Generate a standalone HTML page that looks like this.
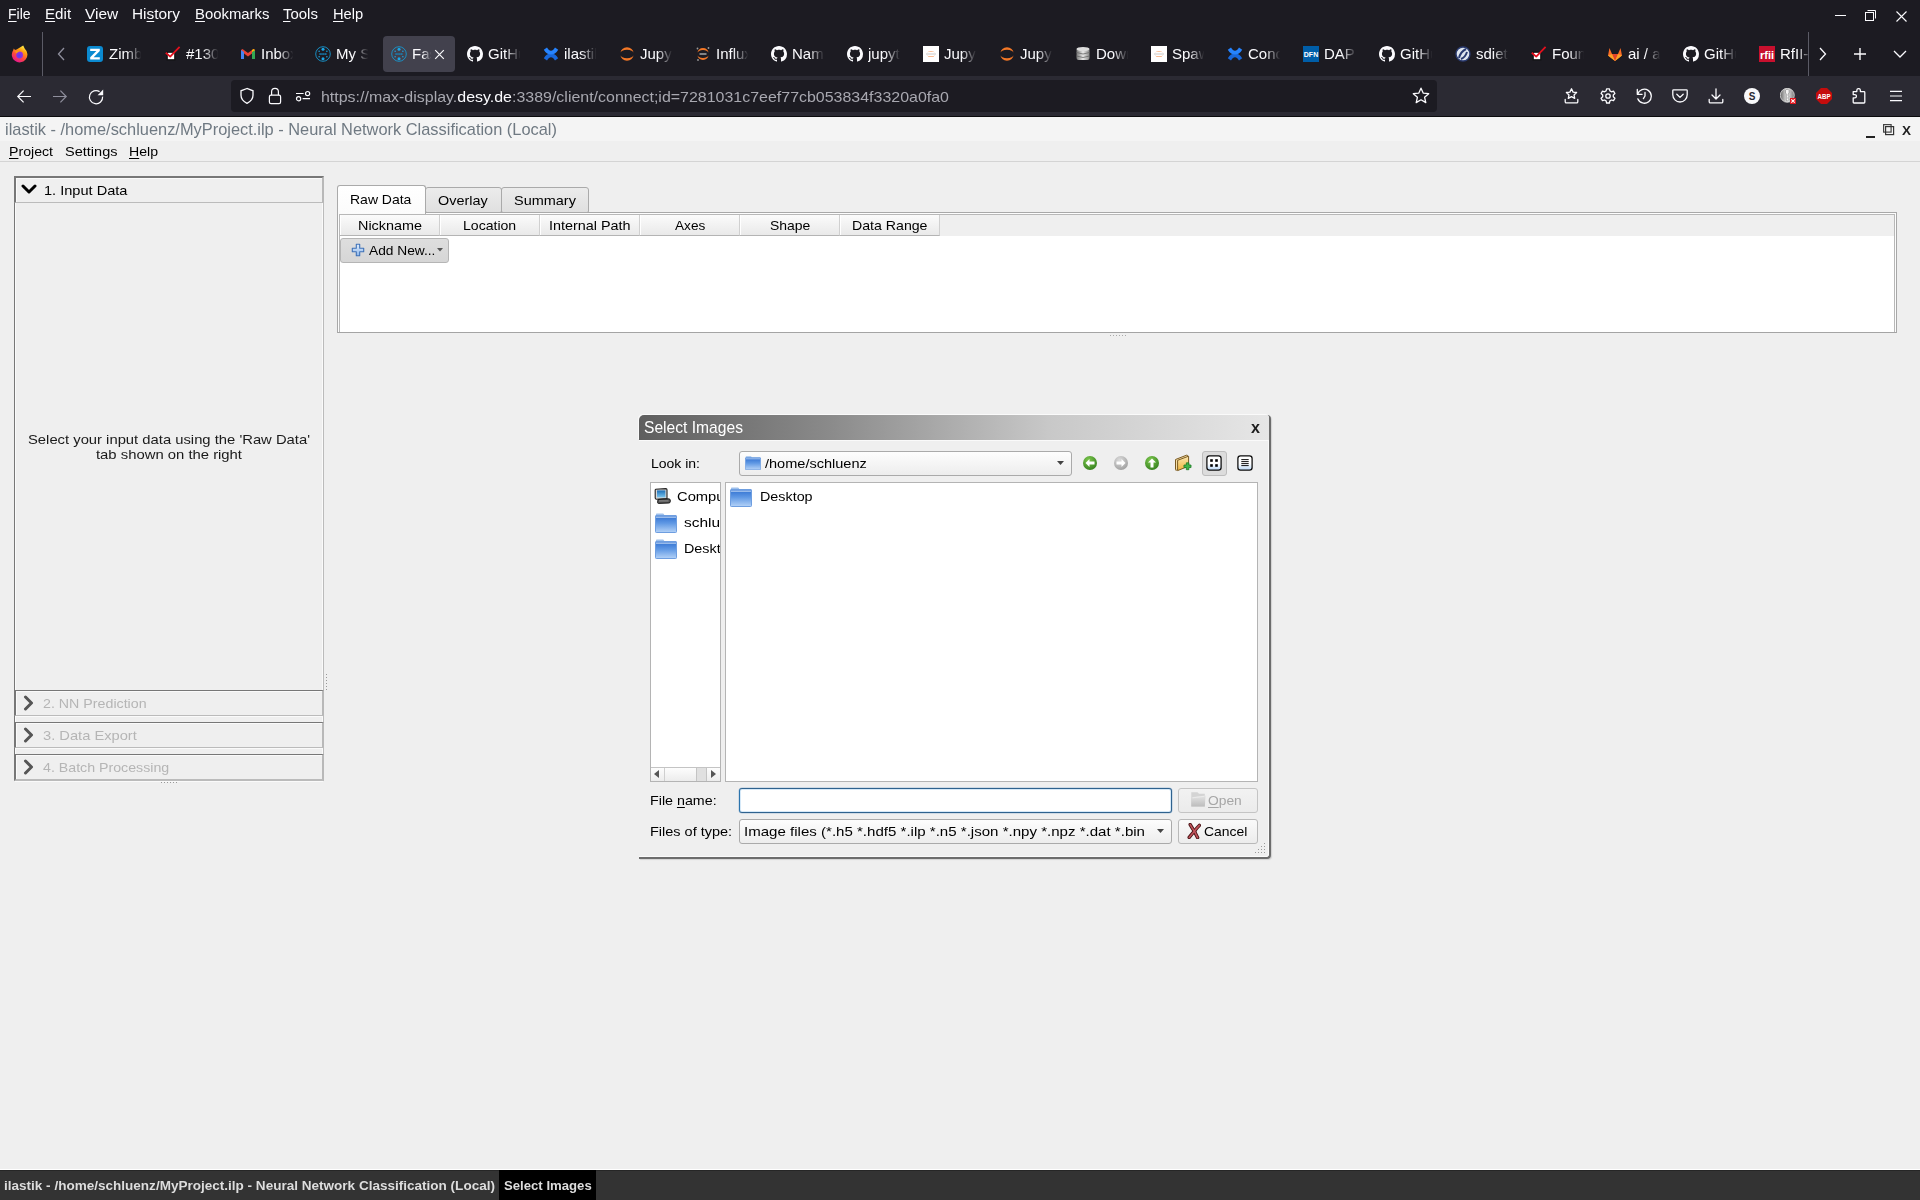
<!DOCTYPE html><html><head><meta charset="utf-8"><style>
*{margin:0;padding:0;box-sizing:border-box}
html,body{width:1920px;height:1200px;overflow:hidden;background:#efefef;font-family:"Liberation Sans",sans-serif}
.a{position:absolute}
.t{position:absolute;white-space:nowrap;line-height:1}
.mm{color:#fbfbfe;font-size:15px;top:6px}
.ul{text-decoration:underline;text-underline-offset:2px}
.tab{position:absolute;top:36px;height:36px;width:72px}
.tx{position:absolute;font-size:15px;color:#fbfbfe;white-space:nowrap;overflow:hidden;line-height:16px;
 -webkit-mask-image:linear-gradient(90deg,#000 52%,transparent 98%);mask-image:linear-gradient(90deg,#000 52%,transparent 98%)}
.dv{font-size:13px;color:#000}
</style></head><body>
<div class="a" style="left:0;top:0;width:1920px;height:76px;background:#1c1b22"></div>
<div class="a" style="left:0;top:76px;width:1920px;height:40px;background:#2b2a33"></div>
<div class="a" style="left:0;top:116px;width:1920px;height:1px;background:#0b0b0d"></div>
<div class="t" id="f1" style="left:8px;top:7px;font-size:14px;color:#fbfbfe;transform:scaleX(1.0054);transform-origin:0 0;"><span class="ul">F</span>ile</div>
<div class="t" id="f2" style="left:45px;top:7px;font-size:14px;color:#fbfbfe;transform:scaleX(1.0812);transform-origin:0 0;"><span class="ul">E</span>dit</div>
<div class="t" id="f3" style="left:85px;top:7px;font-size:14px;color:#fbfbfe;transform:scaleX(1.1026);transform-origin:0 0;"><span class="ul">V</span>iew</div>
<div class="t" id="f4" style="left:132px;top:7px;font-size:14px;color:#fbfbfe;transform:scaleX(1.0992);transform-origin:0 0;">Hi<span class="ul">s</span>tory</div>
<div class="t" id="f5" style="left:195px;top:7px;font-size:14px;color:#fbfbfe;transform:scaleX(1.0624);transform-origin:0 0;"><span class="ul">B</span>ookmarks</div>
<div class="t" id="f6" style="left:283px;top:7px;font-size:14px;color:#fbfbfe;transform:scaleX(1.0677);transform-origin:0 0;"><span class="ul">T</span>ools</div>
<div class="t" id="f7" style="left:333px;top:7px;font-size:14px;color:#fbfbfe;transform:scaleX(1.0482);transform-origin:0 0;"><span class="ul">H</span>elp</div>
<div class="a" style="left:1835px;top:15px;width:11px;height:1px;background:#fbfbfe"></div>
<svg class="a" style="left:1864px;top:9px" width="13" height="13"><rect x="1.5" y="3.5" width="8" height="8" fill="none" stroke="#fbfbfe"/><path d="M3.5 1.5h8v8" fill="none" stroke="#fbfbfe"/></svg>
<svg class="a" style="left:1896px;top:11px" width="11" height="11"><path d="M0.5 0.5L10.5 10.5M10.5 0.5L0.5 10.5" stroke="#fbfbfe" stroke-width="1.1"/></svg>
<svg class="a" style="left:11px;top:45px" width="18" height="18" viewBox="0 0 18 18">
<defs><linearGradient id="fxg" x1="0.85" y1="0.05" x2="0.35" y2="1"><stop offset="0" stop-color="#fff44f"/><stop offset="0.3" stop-color="#ffa40e"/><stop offset="0.65" stop-color="#ff4a3d"/><stop offset="1" stop-color="#e6158f"/></linearGradient>
<radialGradient id="fxp" cx="0.45" cy="0.6" r="0.6"><stop offset="0" stop-color="#5b3df0"/><stop offset="1" stop-color="#9f2fd8"/></radialGradient></defs>
<path d="M12.2 0.6l1.6 3.2A7.8 7.8 0 1 1 2.2 5.2l.6-1.6 1.2 1.4 1.6-.6z" fill="url(#fxg)"/>
<circle cx="8.6" cy="10" r="3.4" fill="url(#fxp)"/>
<path d="M3.8 6.6c1.6-1 3.8-.9 5.2.1-1.4 0-2.8.6-3.4 1.8z" fill="#ff9a0e"/>
</svg>
<div class="a" style="left:42px;top:32px;width:1px;height:44px;background:#5b5b66"></div>
<svg class="a" style="left:56px;top:47px" width="12" height="14"><path d="M8 1L2.5 7L8 13" fill="none" stroke="#8f8f9d" stroke-width="1.3"/></svg>
<div class="a" style="left:383px;top:36px;width:72px;height:36px;border-radius:4px;background:#42414d"></div>
<div class="a" style="left:87px;top:46px;width:16px;height:16px"><svg width="16" height="16"><rect x="0" y="0" width="16" height="16" rx="3" fill="#0b8ad0"/><path d="M3.2 2.8h9.6v2.2L6.6 11.2h6.2v2.2H3.2v-2.2L9.4 5H3.2z" fill="#fff"/></svg></div>
<div class="tx" style="left:109px;top:46px;width:33px">Zimbra</div>
<div class="a" style="left:165px;top:46px;width:16px;height:16px"><svg width="16" height="16"><rect x="2.2" y="6.2" width="7.6" height="7.6" fill="#fff" stroke="#111" stroke-width="1.2"/><path d="M0.8 6.8l4.4 3.8L14.6 0.8" fill="none" stroke="#e3101e" stroke-width="1.8" stroke-linejoin="round"/></svg></div>
<div class="tx" style="left:186px;top:46px;width:33px">#1304</div>
<div class="a" style="left:240px;top:46px;width:16px;height:16px"><svg width="16" height="16"><path d="M1 4v9h3V7.5L8 10.5l4-3V13h3V4l-1.5-1L8 7 2.5 3z" fill="#ea4335"/><path d="M1 4v9h3V6z" fill="#4285f4"/><path d="M12 6v7h3V4z" fill="#34a853"/><path d="M12 6l3-2-1.5-1L12 4z" fill="#fbbc04"/></svg></div>
<div class="tx" style="left:261px;top:46px;width:33px">Inbox</div>
<div class="a" style="left:315px;top:46px;width:16px;height:16px"><svg width="16" height="16"><circle cx="8" cy="8" r="7.3" fill="none" stroke="#1797d0" stroke-width=".9"/><g fill="#1aa6e6"><circle cx="8" cy="3.2" r="1.5"/><circle cx="8" cy="12.8" r="1.5"/><circle cx="4.1" cy="5.3" r=".75"/><circle cx="11.9" cy="5.3" r=".75"/><circle cx="4.1" cy="10.7" r=".75"/><circle cx="11.9" cy="10.7" r=".75"/></g><g fill="#1585bd"><rect x="4.4" y="7.2" width="1.4" height="1.7"/><rect x="6.3" y="7.2" width="1.4" height="1.7"/><rect x="8.2" y="7.2" width="1.4" height="1.7"/><rect x="10.1" y="7.2" width="1.4" height="1.7"/></g></svg></div>
<div class="tx" style="left:336px;top:46px;width:33px">My Sp</div>
<div class="a" style="left:391px;top:46px;width:16px;height:16px"><svg width="16" height="16"><circle cx="8" cy="8" r="7.3" fill="none" stroke="#1797d0" stroke-width=".9"/><g fill="#1aa6e6"><circle cx="8" cy="3.2" r="1.5"/><circle cx="8" cy="12.8" r="1.5"/><circle cx="4.1" cy="5.3" r=".75"/><circle cx="11.9" cy="5.3" r=".75"/><circle cx="4.1" cy="10.7" r=".75"/><circle cx="11.9" cy="10.7" r=".75"/></g><g fill="#1585bd"><rect x="4.4" y="7.2" width="1.4" height="1.7"/><rect x="6.3" y="7.2" width="1.4" height="1.7"/><rect x="8.2" y="7.2" width="1.4" height="1.7"/><rect x="10.1" y="7.2" width="1.4" height="1.7"/></g></svg></div>
<div class="tx" style="left:412px;top:46px;width:20px">Fast</div>
<div class="a" style="left:467px;top:46px;width:16px;height:16px"><svg width="16" height="16" viewBox="0 0 16 16"><path fill="#fbfbfe" d="M8 0C3.58 0 0 3.58 0 8c0 3.54 2.29 6.53 5.47 7.59.4.07.55-.17.55-.38 0-.19-.01-.82-.01-1.49-2.01.37-2.53-.49-2.69-.94-.09-.23-.48-.94-.82-1.13-.28-.15-.68-.52-.01-.53.63-.01 1.08.58 1.23.82.72 1.21 1.87.87 2.33.66.07-.52.28-.87.51-1.07-1.78-.2-3.64-.89-3.64-3.95 0-.87.31-1.59.82-2.15-.08-.2-.36-1.02.08-2.12 0 0 .67-.21 2.2.82.64-.18 1.32-.27 2-.27.68 0 1.36.09 2 .27 1.53-1.04 2.2-.82 2.2-.82.44 1.1.16 1.92.08 2.12.51.56.82 1.27.82 2.15 0 3.07-1.87 3.75-3.65 3.95.29.25.54.73.54 1.48 0 1.07-.01 1.93-.01 2.2 0 .21.15.46.55.38A8.013 8.013 0 0016 8c0-4.42-3.58-8-8-8z"/></svg></div>
<div class="tx" style="left:488px;top:46px;width:33px">GitHub</div>
<div class="a" style="left:543px;top:46px;width:16px;height:16px"><svg width="16" height="16"><path d="M0.8 12.2C2.8 8.8 5.2 7.4 8 7.4s5.2 1.4 7.2 4.8l-3.2 2.2C10.6 12 9.4 11.2 8 11.2s-2.6.8-4 3.2z" fill="#1868db"/><path d="M15.2 3.8C13.2 7.2 10.8 8.6 8 8.6S2.8 7.2.8 3.8L4 1.6C5.4 4 6.6 4.8 8 4.8s2.6-.8 4-3.2z" fill="#2684ff"/></svg></div>
<div class="tx" style="left:564px;top:46px;width:33px">ilastik</div>
<div class="a" style="left:619px;top:46px;width:16px;height:16px"><svg width="16" height="16"><path d="M1.5 7A6.5 5.8 0 0 1 14.5 7 6.5 3.2 0 0 0 1.5 7z" fill="#f37726"/><path d="M1.5 9A6.5 5.8 0 0 0 14.5 9 6.5 3.2 0 0 1 1.5 9z" fill="#f37726"/></svg></div>
<div class="tx" style="left:640px;top:46px;width:33px">Jupyter</div>
<div class="a" style="left:695px;top:46px;width:16px;height:16px"><svg width="16" height="16"><path d="M2.5 7A5.5 5 0 0 1 13.5 7 5.5 3 0 0 0 2.5 7z" fill="#f37726"/><path d="M2.5 9A5.5 5 0 0 0 13.5 9 5.5 3 0 0 1 2.5 9z" fill="#f37726"/><circle cx="2.5" cy="2.5" r=".9" fill="#9a9a9a"/><circle cx="3" cy="14" r=".9" fill="#9a9a9a"/><circle cx="13.5" cy="2" r=".9" fill="#9a9a9a"/><rect x="4.5" y="7.3" width="7" height="1.4" fill="#b0b0b0"/></svg></div>
<div class="tx" style="left:716px;top:46px;width:33px">Influx</div>
<div class="a" style="left:771px;top:46px;width:16px;height:16px"><svg width="16" height="16" viewBox="0 0 16 16"><path fill="#fbfbfe" d="M8 0C3.58 0 0 3.58 0 8c0 3.54 2.29 6.53 5.47 7.59.4.07.55-.17.55-.38 0-.19-.01-.82-.01-1.49-2.01.37-2.53-.49-2.69-.94-.09-.23-.48-.94-.82-1.13-.28-.15-.68-.52-.01-.53.63-.01 1.08.58 1.23.82.72 1.21 1.87.87 2.33.66.07-.52.28-.87.51-1.07-1.78-.2-3.64-.89-3.64-3.95 0-.87.31-1.59.82-2.15-.08-.2-.36-1.02.08-2.12 0 0 .67-.21 2.2.82.64-.18 1.32-.27 2-.27.68 0 1.36.09 2 .27 1.53-1.04 2.2-.82 2.2-.82.44 1.1.16 1.92.08 2.12.51.56.82 1.27.82 2.15 0 3.07-1.87 3.75-3.65 3.95.29.25.54.73.54 1.48 0 1.07-.01 1.93-.01 2.2 0 .21.15.46.55.38A8.013 8.013 0 0016 8c0-4.42-3.58-8-8-8z"/></svg></div>
<div class="tx" style="left:792px;top:46px;width:33px">Name</div>
<div class="a" style="left:847px;top:46px;width:16px;height:16px"><svg width="16" height="16" viewBox="0 0 16 16"><path fill="#fbfbfe" d="M8 0C3.58 0 0 3.58 0 8c0 3.54 2.29 6.53 5.47 7.59.4.07.55-.17.55-.38 0-.19-.01-.82-.01-1.49-2.01.37-2.53-.49-2.69-.94-.09-.23-.48-.94-.82-1.13-.28-.15-.68-.52-.01-.53.63-.01 1.08.58 1.23.82.72 1.21 1.87.87 2.33.66.07-.52.28-.87.51-1.07-1.78-.2-3.64-.89-3.64-3.95 0-.87.31-1.59.82-2.15-.08-.2-.36-1.02.08-2.12 0 0 .67-.21 2.2.82.64-.18 1.32-.27 2-.27.68 0 1.36.09 2 .27 1.53-1.04 2.2-.82 2.2-.82.44 1.1.16 1.92.08 2.12.51.56.82 1.27.82 2.15 0 3.07-1.87 3.75-3.65 3.95.29.25.54.73.54 1.48 0 1.07-.01 1.93-.01 2.2 0 .21.15.46.55.38A8.013 8.013 0 0016 8c0-4.42-3.58-8-8-8z"/></svg></div>
<div class="tx" style="left:868px;top:46px;width:33px">jupyter</div>
<div class="a" style="left:923px;top:46px;width:16px;height:16px"><svg width="16" height="16"><rect width="16" height="16" fill="#fff"/><path d="M4 6.8A4.5 3.5 0 0 1 12 6.8 4.5 2.5 0 0 0 4 6.8z" fill="#f37726"/><path d="M4 9.2A4.5 3.5 0 0 0 12 9.2 4.5 2.5 0 0 1 4 9.2z" fill="#f37726"/><rect x="3" y="7.6" width="10" height=".8" fill="#bbb"/></svg></div>
<div class="tx" style="left:944px;top:46px;width:33px">Jupyter</div>
<div class="a" style="left:999px;top:46px;width:16px;height:16px"><svg width="16" height="16"><path d="M1.5 7A6.5 5.8 0 0 1 14.5 7 6.5 3.2 0 0 0 1.5 7z" fill="#f37726"/><path d="M1.5 9A6.5 5.8 0 0 0 14.5 9 6.5 3.2 0 0 1 1.5 9z" fill="#f37726"/></svg></div>
<div class="tx" style="left:1020px;top:46px;width:33px">Jupyter</div>
<div class="a" style="left:1075px;top:46px;width:16px;height:16px"><svg width="16" height="16"><defs><linearGradient id="dbg" x1="0" x2="1"><stop offset="0" stop-color="#777"/><stop offset=".5" stop-color="#e8e8e8"/><stop offset="1" stop-color="#888"/></linearGradient></defs><rect x="1.5" y="2" width="13" height="12" rx="2" fill="url(#dbg)"/><ellipse cx="8" cy="3" rx="6.5" ry="2" fill="#ddd"/><path d="M1.5 6.5q6.5 3 13 0M1.5 10q6.5 3 13 0" stroke="#666" fill="none" stroke-width=".8"/></svg></div>
<div class="tx" style="left:1096px;top:46px;width:33px">Downl</div>
<div class="a" style="left:1151px;top:46px;width:16px;height:16px"><svg width="16" height="16"><rect width="16" height="16" fill="#fff"/><path d="M4 6.8A4.5 3.5 0 0 1 12 6.8 4.5 2.5 0 0 0 4 6.8z" fill="#f37726"/><path d="M4 9.2A4.5 3.5 0 0 0 12 9.2 4.5 2.5 0 0 1 4 9.2z" fill="#f37726"/><rect x="3" y="7.6" width="10" height=".8" fill="#bbb"/></svg></div>
<div class="tx" style="left:1172px;top:46px;width:33px">Spawn</div>
<div class="a" style="left:1227px;top:46px;width:16px;height:16px"><svg width="16" height="16"><path d="M0.8 12.2C2.8 8.8 5.2 7.4 8 7.4s5.2 1.4 7.2 4.8l-3.2 2.2C10.6 12 9.4 11.2 8 11.2s-2.6.8-4 3.2z" fill="#1868db"/><path d="M15.2 3.8C13.2 7.2 10.8 8.6 8 8.6S2.8 7.2.8 3.8L4 1.6C5.4 4 6.6 4.8 8 4.8s2.6-.8 4-3.2z" fill="#2684ff"/></svg></div>
<div class="tx" style="left:1248px;top:46px;width:33px">Conce</div>
<div class="a" style="left:1303px;top:46px;width:16px;height:16px"><svg width="16" height="16"><rect width="16" height="16" fill="#005ea8"/><text x="8" y="11" font-family="Liberation Sans" font-weight="bold" font-size="7" fill="#fff" text-anchor="middle">DFN</text></svg></div>
<div class="tx" style="left:1324px;top:46px;width:33px">DAPH</div>
<div class="a" style="left:1379px;top:46px;width:16px;height:16px"><svg width="16" height="16" viewBox="0 0 16 16"><path fill="#fbfbfe" d="M8 0C3.58 0 0 3.58 0 8c0 3.54 2.29 6.53 5.47 7.59.4.07.55-.17.55-.38 0-.19-.01-.82-.01-1.49-2.01.37-2.53-.49-2.69-.94-.09-.23-.48-.94-.82-1.13-.28-.15-.68-.52-.01-.53.63-.01 1.08.58 1.23.82.72 1.21 1.87.87 2.33.66.07-.52.28-.87.51-1.07-1.78-.2-3.64-.89-3.64-3.95 0-.87.31-1.59.82-2.15-.08-.2-.36-1.02.08-2.12 0 0 .67-.21 2.2.82.64-.18 1.32-.27 2-.27.68 0 1.36.09 2 .27 1.53-1.04 2.2-.82 2.2-.82.44 1.1.16 1.92.08 2.12.51.56.82 1.27.82 2.15 0 3.07-1.87 3.75-3.65 3.95.29.25.54.73.54 1.48 0 1.07-.01 1.93-.01 2.2 0 .21.15.46.55.38A8.013 8.013 0 0016 8c0-4.42-3.58-8-8-8z"/></svg></div>
<div class="tx" style="left:1400px;top:46px;width:33px">GitHub</div>
<div class="a" style="left:1455px;top:46px;width:16px;height:16px"><svg width="16" height="16"><circle cx="8" cy="8" r="7" fill="#dfe6f0" stroke="#2a3b70" stroke-width="1.4"/><path d="M4 12c1-4 3-7 7-9M6 13c3-1 5-4 6-7" stroke="#2a3b70" stroke-width="2" fill="none"/></svg></div>
<div class="tx" style="left:1476px;top:46px;width:33px">sdiet</div>
<div class="a" style="left:1531px;top:46px;width:16px;height:16px"><svg width="16" height="16"><rect x="2.2" y="6.2" width="7.6" height="7.6" fill="#fff" stroke="#111" stroke-width="1.2"/><path d="M0.8 6.8l4.4 3.8L14.6 0.8" fill="none" stroke="#e3101e" stroke-width="1.8" stroke-linejoin="round"/></svg></div>
<div class="tx" style="left:1552px;top:46px;width:33px">Found</div>
<div class="a" style="left:1607px;top:46px;width:16px;height:16px"><svg width="16" height="16"><path d="M8 15L1 9.5 2.5 2 5 8h6l2.5-6L15 9.5z" fill="#fc6d26"/><path d="M8 15L5 8h6z" fill="#e24329"/><path d="M1 9.5L5 8 8 15zM15 9.5L11 8 8 15z" fill="#fca326"/></svg></div>
<div class="tx" style="left:1628px;top:46px;width:33px">ai / ai</div>
<div class="a" style="left:1683px;top:46px;width:16px;height:16px"><svg width="16" height="16" viewBox="0 0 16 16"><path fill="#fbfbfe" d="M8 0C3.58 0 0 3.58 0 8c0 3.54 2.29 6.53 5.47 7.59.4.07.55-.17.55-.38 0-.19-.01-.82-.01-1.49-2.01.37-2.53-.49-2.69-.94-.09-.23-.48-.94-.82-1.13-.28-.15-.68-.52-.01-.53.63-.01 1.08.58 1.23.82.72 1.21 1.87.87 2.33.66.07-.52.28-.87.51-1.07-1.78-.2-3.64-.89-3.64-3.95 0-.87.31-1.59.82-2.15-.08-.2-.36-1.02.08-2.12 0 0 .67-.21 2.2.82.64-.18 1.32-.27 2-.27.68 0 1.36.09 2 .27 1.53-1.04 2.2-.82 2.2-.82.44 1.1.16 1.92.08 2.12.51.56.82 1.27.82 2.15 0 3.07-1.87 3.75-3.65 3.95.29.25.54.73.54 1.48 0 1.07-.01 1.93-.01 2.2 0 .21.15.46.55.38A8.013 8.013 0 0016 8c0-4.42-3.58-8-8-8z"/></svg></div>
<div class="tx" style="left:1704px;top:46px;width:33px">GitHub</div>
<div class="a" style="left:1759px;top:46px;width:16px;height:16px"><svg width="16" height="16"><rect width="16" height="16" fill="#c8102e"/><text x="8" y="13" font-family="Liberation Sans" font-weight="bold" font-size="11" fill="#fff" text-anchor="middle">rfii</text></svg></div>
<div class="tx" style="left:1780px;top:46px;width:33px">RfII-</div>
<svg class="a" style="left:434px;top:49px" width="11" height="11"><path d="M1.2 1.2L9.8 9.8M9.8 1.2L1.2 9.8" stroke="#fbfbfe" stroke-width="1.2"/></svg>
<div class="a" style="left:1808px;top:32px;width:1px;height:44px;background:#5b5b66"></div>
<svg class="a" style="left:1817px;top:47px" width="12" height="14"><path d="M3 1L8.5 7L3 13" fill="none" stroke="#fbfbfe" stroke-width="1.3"/></svg>
<svg class="a" style="left:1853px;top:47px" width="14" height="14"><path d="M7 1v12M1 7h12" stroke="#fbfbfe" stroke-width="1.4"/></svg>
<svg class="a" style="left:1893px;top:49px" width="14" height="10"><path d="M1 2l6 6 6-6" fill="none" stroke="#fbfbfe" stroke-width="1.3"/></svg>
<svg class="a" style="left:16px;top:90px" width="16" height="14"><path d="M15 6.5H1.8M7.6 0.7L1.8 6.5l5.8 5.8" fill="none" stroke="#fbfbfe" stroke-width="1.2"/></svg>
<svg class="a" style="left:52px;top:90px" width="16" height="14"><path d="M1 6.5h13.2M8.4 0.7L14.2 6.5l-5.8 5.8" fill="none" stroke="#8f8f9d" stroke-width="1.2"/></svg>
<svg class="a" style="left:88px;top:89px" width="17" height="17"><path d="M14.6 7.6A6.6 6.6 0 1 1 11.6 2.6" fill="none" stroke="#fbfbfe" stroke-width="1.25"/><path d="M15.2 0.6V6.2H9.6z" fill="#fbfbfe"/></svg>
<div class="a" style="left:231px;top:80px;width:1206px;height:32px;border-radius:4px;background:#1c1b22"></div>
<svg class="a" style="left:238px;top:87px" width="18" height="18"><path d="M9 1.5L3 3.8v4.5c0 4 3 6.5 6 8 3-1.5 6-4 6-8V3.8z" fill="none" stroke="#fbfbfe" stroke-width="1.3"/></svg>
<svg class="a" style="left:266px;top:87px" width="18" height="18"><rect x="3.4" y="8.2" width="11.2" height="8.4" rx="1.6" fill="none" stroke="#fbfbfe" stroke-width="1.2"/><path d="M5.6 8.2V4.8a3.4 3.4 0 0 1 6.8 0V8.2" fill="none" stroke="#fbfbfe" stroke-width="1.2"/></svg>
<svg class="a" style="left:293px;top:87px" width="18" height="18"><path d="M3 6.5h7.6M9.6 11.7h7.4" stroke="#fbfbfe" stroke-width="1.2"/><circle cx="14.6" cy="6.6" r="2.1" fill="none" stroke="#fbfbfe" stroke-width="1.2"/><circle cx="5.6" cy="11.7" r="2.1" fill="none" stroke="#fbfbfe" stroke-width="1.2"/></svg>
<div class="t" id="f8" style="left:321px;top:89px;font-size:15px;color:#a8a8b0;transform:scaleX(1.0638);transform-origin:0 0;">https://max-display.<span style="color:#fbfbfe">desy.de</span>:3389/client/connect;id=7281031c7eef77cb053834f3320a0fa0</div>
<svg class="a" style="left:1411px;top:86px" width="20" height="20"><path d="M10 2.2l2.3 5 5.4.5-4.1 3.6 1.2 5.3L10 13.8l-4.8 2.8 1.2-5.3L2.3 7.7l5.4-.5z" fill="none" stroke="#fbfbfe" stroke-width="1.3" stroke-linejoin="round"/></svg>
<svg class="a" style="left:1564px;top:88px" width="16" height="16" viewBox="0 0 16 16"><path d="M7.5 0.8l1.6 3.3 3.5.4-2.6 2.4.7 3.5-3.2-1.8-3.2 1.8.7-3.5L2.4 4.5l3.5-.4z" stroke="#fbfbfe" stroke-width="1.3" fill="none" stroke-linejoin="round" stroke-linecap="round"/><path d="M1.2 11.5v2.2a1.2 1.2 0 0 0 1.2 1.2h10.2a1.2 1.2 0 0 0 1.2-1.2v-2.2" stroke="#fbfbfe" stroke-width="1.3" fill="none" stroke-linejoin="round" stroke-linecap="round"/></svg>
<svg class="a" style="left:1600px;top:88px" width="16" height="16" viewBox="0 0 16 16"><circle cx="8" cy="8" r="2.2" stroke="#fbfbfe" stroke-width="1.3" fill="none" stroke-linejoin="round" stroke-linecap="round"/><path d="M6.6 0.8h2.8l.5 2.1 1.6.9 2-.7 1.4 2.4-1.6 1.5v1.8l1.6 1.5-1.4 2.4-2-.7-1.6.9-.5 2.1H6.6l-.5-2.1-1.6-.9-2 .7L1.1 10.3l1.6-1.5V7L1.1 5.5 2.5 3.1l2 .7 1.6-.9z" stroke="#fbfbfe" stroke-width="1.3" fill="none" stroke-linejoin="round" stroke-linecap="round"/></svg>
<svg class="a" style="left:1636px;top:88px" width="16" height="16" viewBox="0 0 16 16"><path d="M1.6 6.2A7 7 0 1 1 1.8 10.8" stroke="#fbfbfe" stroke-width="1.3" fill="none" stroke-linejoin="round" stroke-linecap="round" stroke-width="1.2"/><path d="M1.3 1.5v4.8h4.8" stroke="#fbfbfe" stroke-width="1.3" fill="none" stroke-linejoin="round" stroke-linecap="round" stroke-width="1.2"/><path d="M9 4.5v3.5l-1.6 2.6" stroke="#fbfbfe" stroke-width="1.3" fill="none" stroke-linejoin="round" stroke-linecap="round"/></svg>
<svg class="a" style="left:1672px;top:88px" width="16" height="16" viewBox="0 0 16 16"><path d="M1.6 1.8h12.8a.8.8 0 0 1 .8.8v4.2a7.2 7.2 0 0 1-14.4 0V2.6a.8.8 0 0 1 .8-.8z" stroke="#fbfbfe" stroke-width="1.3" fill="none" stroke-linejoin="round" stroke-linecap="round"/><path d="M4.8 6.2L8 9.4l3.2-3.2" stroke="#fbfbfe" stroke-width="1.3" fill="none" stroke-linejoin="round" stroke-linecap="round" stroke-width="1.3"/></svg>
<svg class="a" style="left:1708px;top:88px" width="16" height="16" viewBox="0 0 16 16"><path d="M8 0.8v10M4 7l4 4 4-4" stroke="#fbfbfe" stroke-width="1.3" fill="none" stroke-linejoin="round" stroke-linecap="round"/><path d="M1.2 11.5v2.2a1.2 1.2 0 0 0 1.2 1.2h11.2a1.2 1.2 0 0 0 1.2-1.2v-2.2" stroke="#fbfbfe" stroke-width="1.3" fill="none" stroke-linejoin="round" stroke-linecap="round"/></svg>
<svg class="a" style="left:1744px;top:88px" width="16" height="16" viewBox="0 0 16 16"><circle cx="8" cy="8" r="8" fill="#f9f9fb"/><text x="8" y="11.6" font-family="Liberation Sans" font-weight="bold" font-size="10" fill="#2b2a33" text-anchor="middle">S</text></svg>
<svg class="a" style="left:1780px;top:88px" width="16" height="16" viewBox="0 0 16 16"><defs><linearGradient id="kg" x1="0" x2="1"><stop offset="0" stop-color="#666"/><stop offset=".5" stop-color="#eee"/><stop offset="1" stop-color="#777"/></linearGradient></defs><circle cx="7.3" cy="7.3" r="7" fill="url(#kg)" stroke="#ddd" stroke-width=".8"/><path d="M5.5 2.5a2 2 0 0 1 3.6 0v2.5l-1 1v1.5l.8.8-.8.8v1.5l.8.8-1.8 2L6.3 12V6L5.5 5z" fill="#f4f4f4" stroke="#666" stroke-width=".5"/><rect x="10" y="10" width="6" height="6" fill="#e0161e"/><path d="M11.3 11.3l3.4 3.4M14.7 11.3l-3.4 3.4" stroke="#fff" stroke-width="1.1"/></svg>
<svg class="a" style="left:1816px;top:88px" width="16" height="16" viewBox="0 0 16 16"><path d="M5 0h6l5 5v6l-5 5H5l-5-5V5z" fill="#c50c0c"/><text x="8" y="10.9" font-family="Liberation Sans" font-weight="bold" font-size="6.6" fill="#fff" text-anchor="middle" textLength="13" lengthAdjust="spacingAndGlyphs">ABP</text></svg>
<svg class="a" style="left:1852px;top:88px" width="16" height="16" viewBox="0 0 16 16"><path d="M1.2 14.2V9.8h1.6a1.6 1.6 0 0 0 0-3.2H1.2V3.6h3.6V2.4a1.8 1.8 0 0 1 3.6 0v1.2h3.6a.8.8 0 0 1 .8.8v9.8a.8.8 0 0 1-.8.8H2a.8.8 0 0 1-.8-.8z" stroke="#fbfbfe" stroke-width="1.3" fill="none" stroke-linejoin="round" stroke-linecap="round"/></svg>
<svg class="a" style="left:1888px;top:88px" width="16" height="16" viewBox="0 0 16 16"><path d="M2 3.4h12M2 8h12M2 12.6h12" stroke="#fbfbfe" stroke-width="1.2"/></svg>
<div class="a" style="left:0;top:117px;width:1920px;height:24px;background:#f4f4f4"></div>
<div class="t" id="f9" style="left:5px;top:121px;font-size:17px;color:#6f7982;transform:scaleX(0.9641);transform-origin:0 0;">ilastik - /home/schluenz/MyProject.ilp - Neural Network Classification (Local)</div>
<div class="a" style="left:1866px;top:136px;width:9px;height:2px;background:#222"></div>
<svg class="a" style="left:1883px;top:124px" width="12" height="12"><rect x="0.6" y="0.6" width="7.5" height="7.5" fill="none" stroke="#444" stroke-width="1.2"/><rect x="2.6" y="2.6" width="8" height="8" fill="none" stroke="#333" stroke-width="1.2"/></svg>
<div class="t" id="f10" style="left:1902px;top:124px;font-size:13px;color:#222;font-weight:bold;transform:scaleX(1.0378);transform-origin:0 0;">X</div>
<div class="a" style="left:0;top:161px;width:1920px;height:1px;background:#d4d4d4"></div>
<div class="t" id="f11" style="left:9px;top:145px;font-size:13px;color:#000;transform:scaleX(1.0873);transform-origin:0 0;"><span class="ul">P</span>roject</div>
<div class="t" id="f12" style="left:65px;top:145px;font-size:13px;color:#000;transform:scaleX(1.1174);transform-origin:0 0;">Settings</div>
<div class="t" id="f13" style="left:129px;top:145px;font-size:13px;color:#000;transform:scaleX(1.0841);transform-origin:0 0;"><span class="ul">H</span>elp</div>
<div class="a" style="left:14px;top:176px;width:310px;height:605px;border-left:1px solid #777;border-top:1px solid #777;border-right:1px solid #bbb;border-bottom:2px solid #bbb;box-shadow:inset 1px 1px 0 #fafafa,inset -1px 0 0 #fafafa"></div>
<div class="a" style="left:14px;top:176px;width:310px;height:27px;border-top:2px solid #777;border-left:2px solid #777;border-right:2px solid #b8b8b8;border-bottom:1px solid #bbb;box-shadow:inset 1px 1px 0 #fafafa;background:#efefef"></div>
<svg class="a" style="left:21px;top:184px" width="16" height="11"><path d="M2 2l6 6 6-6" fill="none" stroke="#000" stroke-width="3" stroke-linecap="round" stroke-linejoin="round"/></svg>
<div class="t" id="f14" style="left:44px;top:184px;font-size:13px;color:#000;transform:scaleX(1.1215);transform-origin:0 0;">1. Input Data</div>
<div class="t" id="f15" style="left:28px;top:433px;font-size:13px;color:#1a1a1a;transform:scaleX(1.1381);transform-origin:0 0;">Select your input data using the 'Raw Data'</div>
<div class="t" id="f16" style="left:96px;top:448px;font-size:13px;color:#1a1a1a;transform:scaleX(1.1413);transform-origin:0 0;">tab shown on the right</div>
<div class="a" style="left:14px;top:690px;width:310px;height:26px;border-top:1px solid #777;border-left:2px solid #777;border-right:2px solid #b8b8b8;border-bottom:1px solid #bbb;box-shadow:inset 1px 1px 0 #fafafa;background:#efefef"></div>
<div class="a" style="left:15px;top:716px;width:308px;height:1px;background:#fafafa"></div>
<svg class="a" style="left:23px;top:695px" width="12" height="16"><path d="M2.5 2l6 6-6 6" fill="none" stroke="#555" stroke-width="3" stroke-linecap="round" stroke-linejoin="round"/></svg>
<div class="t" id="f17" style="left:43px;top:697px;font-size:13px;color:#b5b5b5;transform:scaleX(1.0945);transform-origin:0 0;">2. NN Prediction</div>
<div class="a" style="left:14px;top:722px;width:310px;height:26px;border-top:1px solid #777;border-left:2px solid #777;border-right:2px solid #b8b8b8;border-bottom:1px solid #bbb;box-shadow:inset 1px 1px 0 #fafafa;background:#efefef"></div>
<div class="a" style="left:15px;top:748px;width:308px;height:1px;background:#fafafa"></div>
<svg class="a" style="left:23px;top:727px" width="12" height="16"><path d="M2.5 2l6 6-6 6" fill="none" stroke="#555" stroke-width="3" stroke-linecap="round" stroke-linejoin="round"/></svg>
<div class="t" id="f18" style="left:43px;top:729px;font-size:13px;color:#b5b5b5;transform:scaleX(1.1286);transform-origin:0 0;">3. Data Export</div>
<div class="a" style="left:14px;top:754px;width:310px;height:27px;border-top:1px solid #777;border-left:2px solid #777;border-right:2px solid #b8b8b8;border-bottom:2px solid #bbb;box-shadow:inset 1px 1px 0 #fafafa;background:#efefef"></div>
<div class="a" style="left:15px;top:781px;width:308px;height:1px;background:#fafafa"></div>
<svg class="a" style="left:23px;top:759px" width="12" height="16"><path d="M2.5 2l6 6-6 6" fill="none" stroke="#555" stroke-width="3" stroke-linecap="round" stroke-linejoin="round"/></svg>
<div class="t" id="f19" style="left:43px;top:761px;font-size:13px;color:#b5b5b5;transform:scaleX(1.0915);transform-origin:0 0;">4. Batch Processing</div>
<svg class="a" style="left:325px;top:673px" width="3" height="20"><rect x="1" y="1" width="1" height="1" fill="#999"/><rect x="1" y="4" width="1" height="1" fill="#999"/><rect x="1" y="7" width="1" height="1" fill="#999"/><rect x="1" y="10" width="1" height="1" fill="#999"/><rect x="1" y="13" width="1" height="1" fill="#999"/><rect x="1" y="16" width="1" height="1" fill="#999"/></svg>
<svg class="a" style="left:160px;top:781px" width="20" height="3"><rect x="1" y="1" width="1" height="1" fill="#999"/><rect x="4" y="1" width="1" height="1" fill="#999"/><rect x="7" y="1" width="1" height="1" fill="#999"/><rect x="10" y="1" width="1" height="1" fill="#999"/><rect x="13" y="1" width="1" height="1" fill="#999"/><rect x="16" y="1" width="1" height="1" fill="#999"/></svg>
<div class="a" style="left:337px;top:212px;width:1560px;height:121px;border:1px solid #a8a8a8;border-bottom-color:#a4a4a4;background:#fdfdfd"></div>
<div class="a" style="left:339px;top:214px;width:1556px;height:118px;border:1px solid #b8b8b8;border-bottom:none;background:#fff"></div>
<div class="a" style="left:340px;top:215px;width:1554px;height:21px;background:#efefef"></div>
<div class="a" style="left:340px;top:215px;width:100px;height:21px;background:linear-gradient(#fbfbfb,#e9e9e9);border-right:1px solid #d0d0d0;border-bottom:1px solid #b4b4b4;box-shadow:inset 1px 0 0 #fff"></div>
<div class="t" id="f20" style="left:358px;top:219px;font-size:13px;color:#000;transform:scaleX(1.1073);transform-origin:0 0;">Nickname</div>
<div class="a" style="left:440px;top:215px;width:100px;height:21px;background:linear-gradient(#fbfbfb,#e9e9e9);border-right:1px solid #d0d0d0;border-bottom:1px solid #b4b4b4;box-shadow:inset 1px 0 0 #fff"></div>
<div class="t" id="f21" style="left:463px;top:219px;font-size:13px;color:#000;transform:scaleX(1.0823);transform-origin:0 0;">Location</div>
<div class="a" style="left:540px;top:215px;width:100px;height:21px;background:linear-gradient(#fbfbfb,#e9e9e9);border-right:1px solid #d0d0d0;border-bottom:1px solid #b4b4b4;box-shadow:inset 1px 0 0 #fff"></div>
<div class="t" id="f22" style="left:549px;top:219px;font-size:13px;color:#000;transform:scaleX(1.1069);transform-origin:0 0;">Internal Path</div>
<div class="a" style="left:640px;top:215px;width:100px;height:21px;background:linear-gradient(#fbfbfb,#e9e9e9);border-right:1px solid #d0d0d0;border-bottom:1px solid #b4b4b4;box-shadow:inset 1px 0 0 #fff"></div>
<div class="t" id="f23" style="left:675px;top:219px;font-size:13px;color:#000;transform:scaleX(1.0482);transform-origin:0 0;">Axes</div>
<div class="a" style="left:740px;top:215px;width:100px;height:21px;background:linear-gradient(#fbfbfb,#e9e9e9);border-right:1px solid #d0d0d0;border-bottom:1px solid #b4b4b4;box-shadow:inset 1px 0 0 #fff"></div>
<div class="t" id="f24" style="left:770px;top:219px;font-size:13px;color:#000;transform:scaleX(1.0720);transform-origin:0 0;">Shape</div>
<div class="a" style="left:840px;top:215px;width:100px;height:21px;background:linear-gradient(#fbfbfb,#e9e9e9);border-right:1px solid #d0d0d0;border-bottom:1px solid #b4b4b4;box-shadow:inset 1px 0 0 #fff"></div>
<div class="t" id="f25" style="left:852px;top:219px;font-size:13px;color:#000;transform:scaleX(1.0880);transform-origin:0 0;">Data Range</div>
<div class="a" style="left:425px;top:187px;width:77px;height:26px;border:1px solid #aaaaaa;border-radius:3px 3px 2px 2px;background:linear-gradient(#ececec,#e0e0e0)"></div>
<div class="a" style="left:501px;top:187px;width:88px;height:26px;border:1px solid #aaaaaa;border-radius:3px 3px 2px 2px;background:linear-gradient(#ececec,#e0e0e0)"></div>
<div class="a" style="left:337px;top:185px;width:89px;height:29px;border:1px solid #aaaaaa;border-bottom:none;border-radius:3px 3px 0 0;background:linear-gradient(#ffffff,#fbfbfb)"></div>
<div class="t" id="f26" style="left:350px;top:193px;font-size:13px;color:#000;transform:scaleX(1.0757);transform-origin:0 0;">Raw Data</div>
<div class="t" id="f27" style="left:438px;top:194px;font-size:13px;color:#000;transform:scaleX(1.1072);transform-origin:0 0;">Overlay</div>
<div class="t" id="f28" style="left:514px;top:194px;font-size:13px;color:#000;transform:scaleX(1.1128);transform-origin:0 0;">Summary</div>
<div class="a" style="left:340px;top:238px;width:109px;height:25px;border:1px solid #b5b5b5;border-radius:3px;background:linear-gradient(#dedede,#d6d6d6)"></div>
<svg class="a" style="left:351px;top:243px" width="14" height="14"><defs><linearGradient id="plg" x1="0" y1="0" x2="0" y2="1"><stop offset="0" stop-color="#e2eefc"/><stop offset="1" stop-color="#8db6ea"/></linearGradient></defs><path d="M5.3 1.3h3.4v4h4v3.4h-4v4H5.3v-4h-4V5.3h4z" fill="url(#plg)" stroke="#3f72b8" stroke-width="1.1" stroke-linejoin="round"/></svg>
<div class="t" id="f29" style="left:369px;top:244px;font-size:13px;color:#000;transform:scaleX(1.0561);transform-origin:0 0;">Add New...</div>
<svg class="a" style="left:437px;top:248px" width="6" height="4"><path d="M0 0h6L3 3.5z" fill="#555"/></svg>
<svg class="a" style="left:1109px;top:334px" width="20" height="3"><rect x="1" y="1" width="1" height="1" fill="#aaa"/><rect x="4" y="1" width="1" height="1" fill="#aaa"/><rect x="7" y="1" width="1" height="1" fill="#aaa"/><rect x="10" y="1" width="1" height="1" fill="#aaa"/><rect x="13" y="1" width="1" height="1" fill="#aaa"/><rect x="16" y="1" width="1" height="1" fill="#aaa"/></svg>
<div class="a" style="left:639px;top:415px;width:632px;height:444px;background:#efefef;border-right:2px solid #6c6c6c;border-bottom:2px solid #6c6c6c;border-radius:0 4px 4px 0;box-shadow:inset -1px -1px 0 #fafafa,1px 1px 1px rgba(0,0,0,.12)"></div>
<svg class="a" style="left:1255px;top:843px" width="11" height="11"><g fill="#9a9a9a"><rect x="9" y="0" width="1" height="1"/><rect x="6" y="3" width="1" height="1"/><rect x="9" y="3" width="1" height="1"/><rect x="3" y="6" width="1" height="1"/><rect x="6" y="6" width="1" height="1"/><rect x="9" y="6" width="1" height="1"/><rect x="0" y="9" width="1" height="1"/><rect x="3" y="9" width="1" height="1"/><rect x="6" y="9" width="1" height="1"/><rect x="9" y="9" width="1" height="1"/></g></svg>
<div class="a" style="left:639px;top:415px;width:630px;height:25px;border-radius:5px 3px 0 0;box-shadow:-1px -1px 0 #fafafa,0 1px 0 #fafafa;background:linear-gradient(90deg,#5e5e5e 0%,#8a8a8a 30%,#c8c8c8 65%,#e6e6e6 100%)"></div>
<div class="t" id="f30" style="left:644px;top:419px;font-size:17px;color:#fff;transform:scaleX(0.9189);transform-origin:0 0;">Select Images</div>
<div class="t" id="f31" style="left:1251px;top:419px;font-size:17px;color:#1e1e1e;font-weight:bold;transform:scaleX(0.9505);transform-origin:0 0;">x</div>
<div class="t" id="f32" style="left:651px;top:457px;font-size:13px;color:#000;transform:scaleX(1.0758);transform-origin:0 0;">Look in:</div>
<div class="a" style="left:739px;top:451px;width:333px;height:25px;border:1px solid #aaaaaa;border-radius:3px;background:linear-gradient(#fdfdfd,#ededed)"></div>
<svg class="a" style="left:745px;top:456px" width="16" height="14" viewBox="0 0 22 20" preserveAspectRatio="none"><defs><linearGradient id="fg745_456" x1="0" y1="0" x2="0" y2="1"><stop offset="0" stop-color="#2f6fd0"/><stop offset="0.45" stop-color="#5f98e4"/><stop offset="1" stop-color="#b4d2f7"/></linearGradient></defs><path d="M1 3V1.2Q1 .5 1.7 .5H8Q8.6 .5 8.9 1.2L9.4 2.2H21V4H1z" fill="#9ec0ec"/><rect x="0.5" y="2.5" width="21" height="17" rx="0.8" fill="url(#fg745_456)" stroke="#6e9ee0" stroke-width="1"/><rect x="1" y="3.6" width="20" height="1" fill="#d6e6fa"/></svg>
<div class="t" id="f33" style="left:765px;top:457px;font-size:13px;color:#000;transform:scaleX(1.1179);transform-origin:0 0;">/home/schluenz</div>
<svg class="a" style="left:1057px;top:461px" width="7" height="4"><path d="M0 0h7L3.5 4z" fill="#444"/></svg>
<svg class="a" style="left:1082px;top:455px" width="16" height="16"><defs><radialGradient id="cg1090" cx=".4" cy=".3" r=".8"><stop offset="0" stop-color="#7ec94f"/><stop offset="1" stop-color="#2f7a19"/></radialGradient></defs><circle cx="8" cy="8" r="7" fill="url(#cg1090)"/><path d="M3.5 8l4-4v2.5h5v3h-5V12z" fill="#fff"/></svg>
<svg class="a" style="left:1113px;top:455px" width="16" height="16"><defs><radialGradient id="cg1121" cx=".4" cy=".3" r=".8"><stop offset="0" stop-color="#dddddd"/><stop offset="1" stop-color="#9a9a9a"/></radialGradient></defs><circle cx="8" cy="8" r="7" fill="url(#cg1121)"/><path d="M12.5 8l-4-4v2.5h-5v3h5V12z" fill="#fff"/></svg>
<svg class="a" style="left:1144px;top:455px" width="16" height="16"><defs><radialGradient id="cg1152" cx=".4" cy=".3" r=".8"><stop offset="0" stop-color="#7ec94f"/><stop offset="1" stop-color="#2f7a19"/></radialGradient></defs><circle cx="8" cy="8" r="7" fill="url(#cg1152)"/><path d="M8 3.5l4 4H9.5v5h-3v-5H4z" fill="#fff"/></svg>
<svg class="a" style="left:1174px;top:454px" width="18" height="18" viewBox="0 0 18 18"><defs><linearGradient id="nfg" x1="0" y1="0" x2="0" y2="1"><stop offset="0" stop-color="#fbe7b0"/><stop offset="1" stop-color="#f0b53c"/></linearGradient></defs><path d="M1.5 5.5L12.5 1.2Q13.6 .9 13.6 2V11L2.5 16.2Q1.5 16.6 1.5 15.4z" fill="#f6dfa6" stroke="#7a5a22" stroke-width="1"/><path d="M3.6 6.3L14.6 2.2V12.2L3.6 16.6z" fill="url(#nfg)" stroke="#7a5a22" stroke-width="1"/><path d="M11.8 10h2.4V7.8h2.6V10h2.2v2.6h-2.2v2.2h-2.6v-2.2h-2.4z" transform="translate(-1.6 1.2) scale(0.98)" fill="#3fb54a" stroke="#1d7a25" stroke-width=".8"/></svg>
<div class="a" style="left:1202px;top:451px;width:25px;height:25px;border:1px solid #bdbdbd;border-radius:3px;background:#dcdcdc"></div>
<svg class="a" style="left:1206px;top:455px" width="16" height="16" viewBox="0 0 16 16"><defs><linearGradient id="vg1" x1="0" y1="0" x2="0" y2="1"><stop offset=".55" stop-color="#ffffff"/><stop offset="1" stop-color="#bcd8f6"/></linearGradient></defs><rect x="0.9" y="0.9" width="14.2" height="14.2" rx="2.6" fill="url(#vg1)" stroke="#0c0c0c" stroke-width="1.25"/><rect x="4.2" y="4.2" width="2.6" height="2.6" fill="#000"/><rect x="9.2" y="4.2" width="2.6" height="2.6" fill="#000"/><rect x="4.2" y="9.2" width="2.6" height="2.6" fill="#000"/><rect x="9.2" y="9.2" width="2.6" height="2.6" fill="#000"/></svg>
<svg class="a" style="left:1237px;top:455px" width="16" height="16" viewBox="0 0 16 16"><defs><linearGradient id="vg2" x1="0" y1="0" x2="0" y2="1"><stop offset=".55" stop-color="#ffffff"/><stop offset="1" stop-color="#bcd8f6"/></linearGradient></defs><rect x="0.9" y="0.9" width="14.2" height="14.2" rx="2.6" fill="url(#vg2)" stroke="#0c0c0c" stroke-width="1.25"/><path d="M4.3 4.6h7.4M4.3 6.6h7.4M4.3 8.6h7.4M4.3 10.6h7.4" stroke="#111" stroke-width="1"/></svg>
<div class="a" style="left:650px;top:482px;width:71px;height:300px;border:1px solid #b4b4b4;background:#fff;overflow:hidden"></div>
<svg class="a" style="left:654px;top:488px" width="17" height="16" viewBox="0 0 17 16"><defs><linearGradient id="cmpg" x1="0" y1="0" x2="0" y2="1"><stop offset="0" stop-color="#1d6fb8"/><stop offset="1" stop-color="#7cc6ee"/></linearGradient></defs><path d="M1.5 1.2L11.8 .6Q13 .6 13 1.8V10.5L2.5 11.2Q1.2 11.2 1.2 10V2.2Q1.2 1.2 1.5 1.2z" fill="#d8d8d8" stroke="#222" stroke-width="1.1"/><rect x="3" y="2.4" width="8.4" height="7" fill="url(#cmpg)"/><path d="M4 11.5L14.5 10.8Q16.3 10.8 16.3 12.3V13.6Q16.3 14.9 14.8 15L4.5 15.4Q3.6 15.4 3.6 14.4z" fill="#555" stroke="#1a1a1a" stroke-width="1"/><rect x="5" y="12.3" width="9.5" height="1.2" fill="#888"/></svg>
<div class="a" style="left:670px;top:484px;width:50px;height:80px;overflow:hidden">
<div class="t" id="f34" style="left:7px;top:6px;font-size:13px;color:#000;transform:scaleX(1.1335);transform-origin:0 0;">Computer</div>
<div class="t" id="f35" style="left:14px;top:32px;font-size:13px;color:#000;transform:scaleX(1.1888);transform-origin:0 0;">schluenz</div>
<div class="t" id="f36" style="left:14px;top:58px;font-size:13px;color:#000;transform:scaleX(1.1027);transform-origin:0 0;">Desktop</div>
</div>
<svg class="a" style="left:655px;top:513px" width="22" height="20" viewBox="0 0 22 20" preserveAspectRatio="none"><defs><linearGradient id="fg655_513" x1="0" y1="0" x2="0" y2="1"><stop offset="0" stop-color="#2f6fd0"/><stop offset="0.45" stop-color="#5f98e4"/><stop offset="1" stop-color="#b4d2f7"/></linearGradient></defs><path d="M1 3V1.2Q1 .5 1.7 .5H8Q8.6 .5 8.9 1.2L9.4 2.2H21V4H1z" fill="#9ec0ec"/><rect x="0.5" y="2.5" width="21" height="17" rx="0.8" fill="url(#fg655_513)" stroke="#6e9ee0" stroke-width="1"/><rect x="1" y="3.6" width="20" height="1" fill="#d6e6fa"/></svg>
<svg class="a" style="left:655px;top:539px" width="22" height="20" viewBox="0 0 22 20" preserveAspectRatio="none"><defs><linearGradient id="fg655_539" x1="0" y1="0" x2="0" y2="1"><stop offset="0" stop-color="#2f6fd0"/><stop offset="0.45" stop-color="#5f98e4"/><stop offset="1" stop-color="#b4d2f7"/></linearGradient></defs><path d="M1 3V1.2Q1 .5 1.7 .5H8Q8.6 .5 8.9 1.2L9.4 2.2H21V4H1z" fill="#9ec0ec"/><rect x="0.5" y="2.5" width="21" height="17" rx="0.8" fill="url(#fg655_539)" stroke="#6e9ee0" stroke-width="1"/><rect x="1" y="3.6" width="20" height="1" fill="#d6e6fa"/></svg>
<div class="a" style="left:651px;top:767px;width:69px;height:14px;border-top:1px solid #c4c4c4;background:linear-gradient(#fdfdfd,#ececec)"></div>
<div class="a" style="left:664px;top:768px;width:1px;height:13px;background:#cfcfcf"></div>
<div class="a" style="left:696px;top:768px;width:11px;height:13px;background:#e0e0e0;border-left:1px solid #c4c4c4;border-right:1px solid #c4c4c4"></div>
<svg class="a" style="left:654px;top:770px" width="6" height="8"><path d="M5 0v8L0 4z" fill="#555"/></svg>
<svg class="a" style="left:711px;top:770px" width="6" height="8"><path d="M0 0v8l5-4z" fill="#555"/></svg>
<div class="a" style="left:725px;top:482px;width:533px;height:300px;border:1px solid #b4b4b4;background:#fff"></div>
<svg class="a" style="left:730px;top:487px" width="22" height="20" viewBox="0 0 22 20" preserveAspectRatio="none"><defs><linearGradient id="fg730_487" x1="0" y1="0" x2="0" y2="1"><stop offset="0" stop-color="#2f6fd0"/><stop offset="0.45" stop-color="#5f98e4"/><stop offset="1" stop-color="#b4d2f7"/></linearGradient></defs><path d="M1 3V1.2Q1 .5 1.7 .5H8Q8.6 .5 8.9 1.2L9.4 2.2H21V4H1z" fill="#9ec0ec"/><rect x="0.5" y="2.5" width="21" height="17" rx="0.8" fill="url(#fg730_487)" stroke="#6e9ee0" stroke-width="1"/><rect x="1" y="3.6" width="20" height="1" fill="#d6e6fa"/></svg>
<div class="t" id="f37" style="left:760px;top:490px;font-size:13px;color:#000;transform:scaleX(1.1027);transform-origin:0 0;">Desktop</div>
<div class="t" id="f38" style="left:650px;top:794px;font-size:13px;color:#000;transform:scaleX(1.0971);transform-origin:0 0;">File <span class="ul">n</span>ame:</div>
<div class="a" style="left:739px;top:788px;width:433px;height:25px;border:1px solid #2f628e;border-left-color:#2c74ad;border-radius:3px;background:#fff;box-shadow:inset 0 0 0 1px #d6e9f8,0 0 0 0.5px rgba(60,120,180,.35)"></div>
<div class="a" style="left:1178px;top:788px;width:80px;height:25px;border:1px solid #c4c4c4;border-radius:3px;background:linear-gradient(#f2f2f2,#ebebeb)"></div>
<svg class="a" style="left:1191px;top:792px" width="15" height="15" viewBox="0 0 15 15"><defs><linearGradient id="opg" x1="0" y1="0" x2="0" y2="1"><stop offset="0" stop-color="#e4e4e4"/><stop offset="1" stop-color="#bcbcbc"/></linearGradient></defs><path d="M0.3 0.3H6.5L8 1.8H13.8V14.5H0.3z" fill="#d4d4d4"/><path d="M0.3 5.2L14.6 3.6L13.8 14.5H0.3z" fill="url(#opg)"/><path d="M1.5 5.8L13.2 4.4" stroke="#eeeeee" stroke-width=".8"/></svg>
<div class="t" id="f39" style="left:1208px;top:794px;font-size:13px;color:#a6a6a6;transform:scaleX(1.0620);transform-origin:0 0;"><span class="ul">O</span>pen</div>
<div class="t" id="f40" style="left:650px;top:825px;font-size:13px;color:#000;transform:scaleX(1.1139);transform-origin:0 0;">Files of type:</div>
<div class="a" style="left:739px;top:819px;width:433px;height:25px;border:1px solid #aaaaaa;border-radius:3px;background:linear-gradient(#fdfdfd,#ededed)"></div>
<div class="t" id="f41" style="left:744px;top:825px;font-size:13px;color:#000;transform:scaleX(1.1584);transform-origin:0 0;">Image files (*.h5 *.hdf5 *.ilp *.n5 *.json *.npy *.npz *.dat *.bin</div>
<svg class="a" style="left:1157px;top:829px" width="7" height="4"><path d="M0 0h7L3.5 4z" fill="#444"/></svg>
<div class="a" style="left:1178px;top:819px;width:80px;height:25px;border:1px solid #b9b9b9;border-radius:3px;background:linear-gradient(#fafafa,#ececec)"></div>
<svg class="a" style="left:1187px;top:823px" width="14" height="16" viewBox="0 0 14 16"><path d="M3.2 1.6Q5.2 5.2 7.4 8.2Q4.6 11.4 2.2 14.4" fill="none" stroke="#4a1416" stroke-width="3.4" stroke-linecap="round"/><path d="M12.4 2.4Q9.6 5.2 7.4 8.2Q9 11.6 10.6 14.6" fill="none" stroke="#4a1416" stroke-width="3.4" stroke-linecap="round"/><path d="M3.2 1.6Q5.2 5.2 7.4 8.2Q4.6 11.4 2.2 14.4" fill="none" stroke="#c2545c" stroke-width="1.6" stroke-linecap="round"/><path d="M12.4 2.4Q9.6 5.2 7.4 8.2Q9 11.6 10.6 14.6" fill="none" stroke="#c2545c" stroke-width="1.6" stroke-linecap="round"/></svg>
<div class="t" id="f42" style="left:1204px;top:825px;font-size:13px;color:#000;transform:scaleX(1.0700);transform-origin:0 0;">Cancel</div>
<div class="a" style="left:0;top:1169px;width:1920px;height:1px;background:#fff"></div>
<div class="a" style="left:0;top:1170px;width:1920px;height:30px;background:#333333"></div>
<div class="a" style="left:0;top:1170px;width:1920px;height:1px;background:#262626"></div>
<div class="a" style="left:499px;top:1170px;width:97px;height:30px;background:#000"></div>
<div class="t" id="f43" style="left:4px;top:1179px;font-size:13px;color:#dddddd;font-weight:bold;transform:scaleX(1.0408);transform-origin:0 0;">ilastik - /home/schluenz/MyProject.ilp - Neural Network Classification (Local)</div>
<div class="t" id="f44" style="left:504px;top:1179px;font-size:13px;color:#dddddd;font-weight:bold;transform:scaleX(1.0113);transform-origin:0 0;">Select Images</div>
</body></html>
